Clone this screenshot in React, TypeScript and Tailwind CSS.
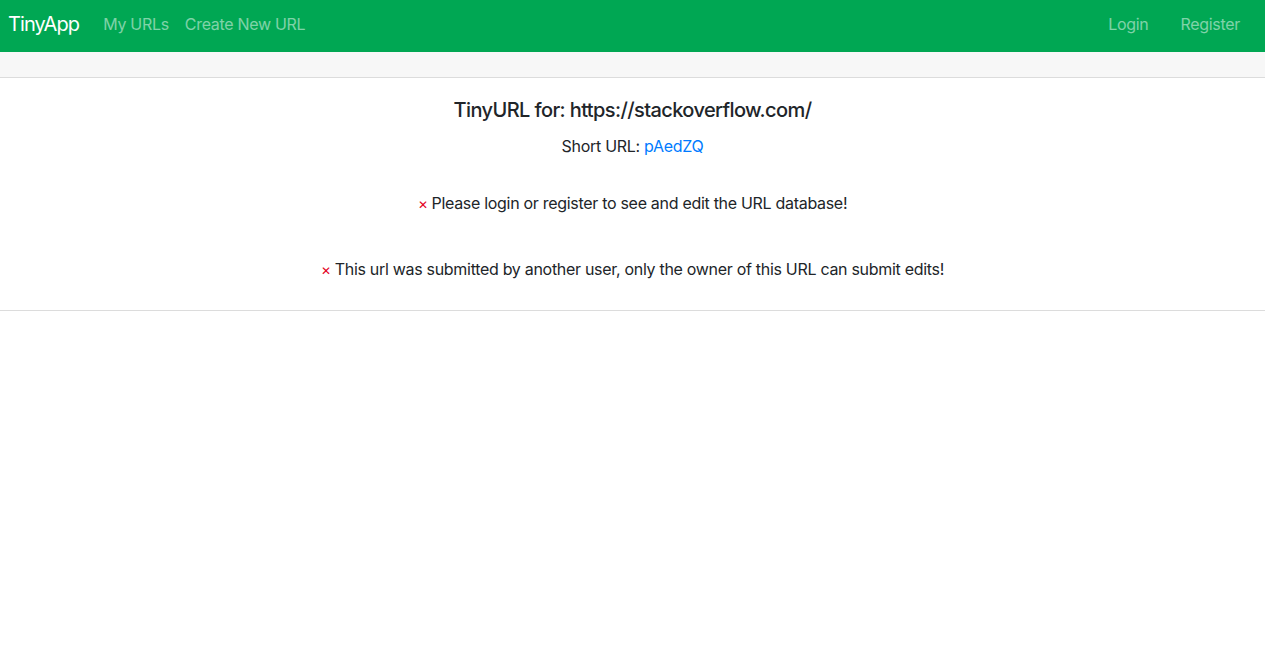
import React from 'react';

const font = { fontFamily: '"Inter", "Liberation Sans", sans-serif' };

const Nav: React.FC = () => (
  <nav className="flex items-center justify-between h-[52px] bg-[#00a753] px-2 pb-1 tracking-[-0.3px]">
    <div className="flex items-center">
      <span className="text-[20px] text-white mr-4 leading-none tracking-[-0.9px]">TinyApp</span>
      <a className="px-2 text-white/50 text-[16px]">My URLs</a>
      <a className="px-2 text-white/50 text-[16px]">Create New URL</a>
    </div>
    <div className="flex items-center gap-4 pr-[9px]">
      <a className="px-2 text-white/50 text-[16px]">Login</a>
      <a className="px-2 text-white/50 text-[16px]">Register</a>
    </div>
  </nav>
);

const Warning: React.FC<{ text: string }> = ({ text }) => (
  <p className="leading-6 text-[16px] text-[#212529]">
    <span className="text-[#e3001b] text-[12px] mr-1">✕</span>
    {text}
  </p>
);

export default function App() {
  return (
    <div style={font} className="min-h-screen bg-white">
      <Nav />
      <div className="border-b border-[#dcdcdc]">
        <div className="h-[26px] bg-[#f7f7f7] border-b border-[#dcdcdc]" />
        <div className="flex flex-col items-center text-center pt-5 pb-[27px] tracking-[-0.3px]">
          <h5 className="text-[20px] font-medium leading-6 text-[#212529] tracking-[-0.6px]">
            TinyURL for: https://stackoverflow.com/
          </h5>
          <p className="mt-3 leading-6 text-[16px] text-[#212529]">
            Short URL: <a className="text-[#007bff]">pAedZQ</a>
          </p>
          <div className="mt-[33px]">
            <Warning text="Please login or register to see and edit the URL database!" />
          </div>
          <div className="mt-[40px]">
            <Warning text="This url was submitted by another user, only the owner of this URL can submit edits!" />
          </div>
        </div>
      </div>
    </div>
  );
}
